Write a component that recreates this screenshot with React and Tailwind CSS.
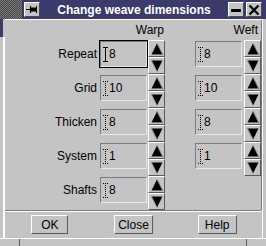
import React from 'react'

const rows = [
  { label: 'Repeat', warp: '8', weft: '8', focus: true },
  { label: 'Grid', warp: '10', weft: '10' },
  { label: 'Thicken', warp: '8', weft: '8' },
  { label: 'System', warp: '1', weft: '1' },
  { label: 'Shafts', warp: '8' },
]

function Cursor({ solid }) {
  return (
    <svg width="5" height="15" viewBox="0 0 5 15" className="shrink-0">
      <path
        d="M0 0.5H5M0 14.5H5M2.5 0V15"
        stroke="#000"
        strokeWidth="1"
        strokeDasharray={solid ? undefined : '1 1'}
        fill="none"
      />
    </svg>
  )
}

function Entry({ value, focus }) {
  const box = (
    <div className="w-[47px] h-[26px] bg-[#c4c4c4] border border-t-[#7c7c7c] border-l-[#7c7c7c] border-b-[#e6e6e6] border-r-[#e6e6e6] flex items-center pl-[2px] gap-[1px] text-[12px] leading-[14px] text-black">
      <Cursor solid={focus} />
      <span>{value}</span>
    </div>
  )
  if (focus) {
    return <div className="-m-px w-fit border border-black">{box}</div>
  }
  return box
}

function Arrow({ up }) {
  return (
    <div className="w-[17px] h-[17px] bg-[#c4c4c4] border border-t-white border-l-white border-b-[#5a5a5a] border-r-[#5a5a5a] flex items-center justify-center">
      <svg width="12" height="12" viewBox="0 0 12 12">
        {up ? (
          <>
            <polygon points="6,0.5 11.5,11.5 0.5,11.5" fill="#000" />
            <path d="M1 11.5H11.5L6 0.5" stroke="#6a6a6a" strokeWidth="1" fill="none" />
          </>
        ) : (
          <>
            <polygon points="0.5,0.5 11.5,0.5 6,11.5" fill="#000" />
            <path d="M0.5 0.5L6 11.5" stroke="#8a8a8a" strokeWidth="1" fill="none" />
          </>
        )}
      </svg>
    </div>
  )
}

function Spin() {
  return (
    <div className="flex flex-col">
      <Arrow up />
      <Arrow />
    </div>
  )
}

function Button({ children, w }) {
  return (
    <div className={`${w} h-[19px] bg-[#c4c4c4] border border-t-white border-l-white border-b-[#5a5a5a] border-r-[#5a5a5a] flex items-center justify-center text-[12px] leading-[14px] text-black`}>
      {children}
    </div>
  )
}

function TitleButton({ children }) {
  return (
    <div className="w-[16px] h-[15px] bg-[#c4c4c4] border border-t-white border-l-white border-b-[#4a4a4a] border-r-[#4a4a4a] flex items-center justify-center">
      {children}
    </div>
  )
}

export default function App() {
  return (
    <div
      className="w-[266px] h-[246px] bg-[#c4c4c4] flex flex-col overflow-hidden"
      style={{ fontFamily: '"Liberation Sans", Arial, sans-serif' }}
    >
      {/* title bar */}
      <div className="h-[19px] shrink-0 bg-[#3b3b6b] flex items-center">
        <div className="w-[22px] h-full bg-[repeating-conic-gradient(#4a4a4a_0_25%,#787878_0_50%)] bg-[length:2px_2px]" />
        <div className="ml-[2px]">
          <TitleButton>
            <svg width="12" height="9" viewBox="0 0 12 9">
              <path d="M0 4.5H4" stroke="#000" strokeWidth="1" />
              <path d="M4.5 1V8" stroke="#000" strokeWidth="1.2" />
              <rect x="5" y="2.5" width="5" height="4" fill="#000" />
              <path d="M10.5 1V8" stroke="#000" strokeWidth="1" />
            </svg>
          </TitleButton>
        </div>
        <div className="flex-1 text-center text-white font-bold text-[12px] leading-[14px] pt-px">
          Change weave dimensions
        </div>
        <div className="flex gap-[2px] mr-[4px]">
          <TitleButton>
            <div className="w-[10px] h-[3px] bg-black mt-[1px]" />
          </TitleButton>
          <TitleButton>
            <svg width="12" height="12" viewBox="0 0 12 12">
              <path d="M1.5 1.5L10.5 10.5M10.5 1.5L1.5 10.5" stroke="#000" strokeWidth="2.4" />
            </svg>
          </TitleButton>
        </div>
      </div>

      {/* window body */}
      <div className="flex flex-1 min-h-0">
        <div className="w-[5px] flex flex-col">
          <div className="h-[18px] bg-[#3b3b6b] w-[3px]" />
          <div className="flex-1 border-r-2 border-r-white ml-[2px]" />
        </div>

        <div className="flex-1 flex flex-col border-t border-t-white">
          {/* content */}
          <div className="flex flex-col border-r border-r-[#7c7c7c]">
            <div className="grid grid-cols-[95px_48px_17px_30px_49px_17px] h-[20px] text-[12px] leading-[14px] text-black">
              <div />
              <div className="col-span-2 text-right pr-[1px] pt-[3px]">Warp</div>
              <div />
              <div className="col-span-2 text-right pr-[3px] pt-[3px]">Weft</div>
            </div>
            {rows.map((r) => (
              <div key={r.label} className="grid grid-cols-[95px_48px_17px_30px_49px_17px] h-[34px]">
                <div className="h-[28px] flex items-center justify-end pr-[3px] text-[12px] leading-[14px] text-black">
                  {r.label}
                </div>
                <div className="pt-px">
                  <Entry value={r.warp} focus={r.focus} />
                </div>
                <Spin />
                <div />
                {r.weft ? (
                  <>
                    <div className="pt-px">
                      <Entry value={r.weft} />
                    </div>
                    <Spin />
                  </>
                ) : (
                  <>
                    <div />
                    <div />
                  </>
                )}
              </div>
            ))}
          </div>

          {/* separator */}
          <div className="h-[2px] border-t border-t-[#7c7c7c] border-b border-b-white mr-[1px]" />

          {/* buttons */}
          <div className="grid grid-cols-3 flex-1 items-center px-[3px] pb-[1px]">
            <div className="flex justify-center">
              <Button w="w-[37px]">OK</Button>
            </div>
            <div className="flex justify-center">
              <Button w="w-[39px]">Close</Button>
            </div>
            <div className="flex justify-center">
              <Button w="w-[39px]">Help</Button>
            </div>
          </div>
        </div>

        <div className="w-[4px] border-l border-l-white" />
      </div>

      {/* bottom frame */}
      <div className="h-[8px] shrink-0 flex border-t border-t-white">
        <div className="w-[20px] border-r border-r-[#5a5a5a]" />
        <div className="flex-1" />
        <div className="w-[20px] border-l border-l-[#5a5a5a]" />
      </div>
    </div>
  )
}
